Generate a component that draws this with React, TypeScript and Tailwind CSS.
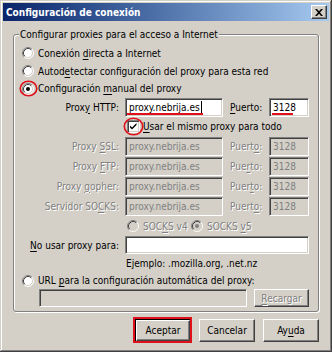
import React from "react";

const sunken =
  "border border-t-[#808080] border-l-[#808080] border-b-white border-r-white shadow-[inset_1px_1px_0_#404040,inset_-1px_-1px_0_#d4d0c8]";
const raised =
  "border border-t-white border-l-white border-b-[#404040] border-r-[#404040] shadow-[inset_-1px_-1px_0_#808080,inset_1px_1px_0_#d4d0c8]";
const dis = "text-[#808080] [text-shadow:1px_1px_0_#fff]";

function U({ children }: { children: React.ReactNode }) {
  return <span className="underline underline-offset-[2px] decoration-1">{children}</span>;
}

function Radio({ checked = false, disabled = false }: { checked?: boolean; disabled?: boolean }) {
  return (
    <svg width="12" height="12" viewBox="0 0 12 12" className="shrink-0">
      <circle cx="6" cy="6" r="5" fill={disabled ? "#d4d0c8" : "#fff"} />
      <path d="M2.11 9.89 A5.5 5.5 0 0 1 9.89 2.11" stroke="#808080" fill="none" />
      <path d="M9.89 2.11 A5.5 5.5 0 0 1 2.11 9.89" stroke="#fff" fill="none" />
      <path d="M2.82 9.18 A4.5 4.5 0 0 1 9.18 2.82" stroke="#404040" fill="none" />
      <path d="M9.18 2.82 A4.5 4.5 0 0 1 2.82 9.18" stroke="#d4d0c8" fill="none" />
      {checked && <circle cx="6" cy="6" r="2" fill={disabled ? "#808080" : "#000"} />}
    </svg>
  );
}

function Checkbox() {
  return (
    <div className={`w-[13px] h-[13px] bg-white shrink-0 relative ${sunken}`}>
      <svg width="11" height="11" viewBox="0 0 11 11" className="absolute left-0 top-0">
        <path d="M2 4.5 L4 6.5 L8.5 2 L8.5 4 L4 8.5 L2 6.5 Z" fill="#000" />
      </svg>
    </div>
  );
}

function ProxyRow({
  label,
  port,
  enabled = false,
}: {
  label: React.ReactNode;
  port: React.ReactNode;
  enabled?: boolean;
}) {
  return (
    <div className="h-[20px] flex items-center">
      <div className={`w-[105px] text-right ${enabled ? "" : dis}`}>{label}</div>
      <div
        className={`ml-[6px] w-[98px] h-[19px] flex items-center pl-[3px] relative ${sunken} ${
          enabled ? "bg-white text-black" : "bg-[#d4d0c8] text-[#808080]"
        }`}
      >
        <span>proxy.nebrija.es</span>
        {enabled && <span className="w-[1px] h-[13px] bg-black ml-[1px]" />}
        {enabled && <span className="absolute left-[1px] top-[14px] w-[76px] h-[2px] bg-[#e0101a]" />}
      </div>
      <div className={`ml-[7px] w-[39px] ${enabled ? "" : dis}`}>{port}</div>
      <div
        className={`w-[40px] h-[19px] flex items-center pl-[3px] relative ${sunken} ${
          enabled ? "bg-white text-black" : "bg-[#d4d0c8] text-[#808080]"
        }`}
      >
        3128
        {enabled && <span className="absolute left-[2px] top-[14px] w-[21px] h-[2px] bg-[#e0101a]" />}
      </div>
    </div>
  );
}

export default function App() {
  return (
    <div
      className="w-[332px] h-[352px] bg-[#d4d0c8] p-[3px] flex flex-col text-[10px] leading-[13px] whitespace-nowrap text-black font-['DejaVu_Sans_Condensed','DejaVu_Sans',sans-serif] shadow-[inset_-1px_-1px_0_#404040,inset_1px_1px_0_#d4d0c8,inset_-2px_-2px_0_#808080,inset_2px_2px_0_#fff] overflow-hidden"
    >
      {/* Title bar */}
      <div className="h-[18px] shrink-0 flex items-center justify-between pl-[3px] pr-[2px] bg-gradient-to-r from-[#0a246a] to-[#a6caf0]">
        <span className="text-white font-bold text-[10px] font-['DejaVu_Sans',sans-serif] [font-stretch:condensed]">
          Configuración de conexión
        </span>
        <div className={`w-[16px] h-[14px] bg-[#d4d0c8] flex items-center justify-center ${raised}`}>
          <svg width="8" height="7" viewBox="0 0 8 7">
            <path d="M0 0h2l2 2.2L6 0h2L5 3.5 8 7H6L4 4.8 2 7H0l3-3.5z" fill="#000" />
          </svg>
        </div>
      </div>

      {/* Group box */}
      <div className="mt-[13px] ml-[10px] w-[306px] relative border border-[#808080] rounded-[3px] shadow-[inset_1px_1px_0_#fff,1px_1px_0_#fff] pt-[9px] pb-[4px]">
        <span className="absolute left-[5px] top-[-7px] px-[1px] bg-[#d4d0c8]">
          Configurar proxies para el acceso a Internet
        </span>

        <div className="h-[18px] flex items-center pl-[8px] gap-[4px]">
          <Radio />
          <span>
            Conexión <U>d</U>irecta a Internet
          </span>
        </div>
        <div className="h-[18px] flex items-center pl-[8px] gap-[4px]">
          <Radio />
          <span>
            Autod<U>e</U>tectar configuración del proxy para esta red
          </span>
        </div>
        <div className="h-[17px] flex items-center pl-[8px] gap-[4px] relative">
          <Radio checked />
          <span>
            Configuración <U>m</U>anual del proxy
          </span>
          <svg width="20" height="17" viewBox="0 0 20 17" className="absolute left-[5px] top-0">
            <ellipse cx="9.5" cy="8.5" rx="8.3" ry="7.3" stroke="#e0101a" strokeWidth="1.6" fill="none" />
          </svg>
        </div>

        <ProxyRow
          enabled
          label={
            <>
              Prox<U>y</U> HTTP:
            </>
          }
          port={
            <>
              <U>P</U>uerto:
            </>
          }
        />

        <div className="h-[19px] flex items-center pl-[113px] gap-[3px] relative">
          <Checkbox />
          <span>
            <U>U</U>sar el mismo proxy para todo
          </span>
          <svg width="22" height="19" viewBox="0 0 22 19" className="absolute left-[109px] top-0">
            <ellipse cx="10.5" cy="9.5" rx="9.2" ry="8.3" stroke="#e0101a" strokeWidth="1.6" fill="none" />
          </svg>
        </div>

        <ProxyRow
          label={
            <>
              Proxy <U>S</U>SL:
            </>
          }
          port={
            <>
              Puert<U>o</U>:
            </>
          }
        />
        <ProxyRow
          label={
            <>
              Proxy <U>F</U>TP:
            </>
          }
          port={
            <>
              Pue<U>r</U>to:
            </>
          }
        />
        <ProxyRow
          label={
            <>
              Proxy <U>g</U>opher:
            </>
          }
          port={
            <>
              Puer<U>t</U>o:
            </>
          }
        />
        <ProxyRow
          label={
            <>
              Servidor SO<U>C</U>KS:
            </>
          }
          port={
            <>
              Puert<U>o</U>:
            </>
          }
        />

        <div className={`h-[20px] flex items-center pl-[113px] ${dis}`}>
          <div className="w-[64px] flex items-center gap-[4px]">
            <Radio disabled />
            <span>
              SOC<U>K</U>S v4
            </span>
          </div>
          <div className="flex items-center gap-[4px]">
            <Radio checked disabled />
            <span>
              SOCKS <U>v</U>5
            </span>
          </div>
        </div>

        <div className="h-[18px] flex items-center">
          <div className="w-[105px] text-right">
            <U>N</U>o usar proxy para:
          </div>
          <div className={`ml-[6px] w-[184px] h-[18px] bg-white ${sunken}`} />
        </div>

        <div className="h-[18px] flex items-center pl-[112px]">Ejemplo: .mozilla.org, .net.nz</div>

        <div className="h-[17px] flex items-center pl-[8px] gap-[4px]">
          <Radio />
          <span>
            URL <U>p</U>ara la configuración automática del proxy:
          </span>
        </div>

        <div className="h-[18px] flex items-center pl-[25px]">
          <div className={`w-[208px] h-[18px] bg-[#d4d0c8] ${sunken}`} />
          <div className={`ml-[7px] w-[55px] h-[18px] flex items-center justify-center ${raised} ${dis}`}>
            <span>
              <U>R</U>ecargar
            </span>
          </div>
        </div>
      </div>

      {/* Buttons */}
      <div className="mt-[7px] ml-[10px] w-[306px] flex justify-end gap-[8px]">
        <div className="relative border border-black">
          <div className={`w-[54px] h-[21px] flex items-center justify-center ${raised}`}>Aceptar</div>
          <div className="absolute -left-[3px] -top-[3px] -right-[2px] -bottom-[2px] border-2 border-[#e0101a]" />
        </div>
        <div className={`w-[56px] h-[23px] flex items-center justify-center ${raised}`}>Cancelar</div>
        <div className={`w-[56px] h-[23px] flex items-center justify-center ${raised}`}>
          <span>
            Ay<U>u</U>da
          </span>
        </div>
      </div>
    </div>
  );
}
